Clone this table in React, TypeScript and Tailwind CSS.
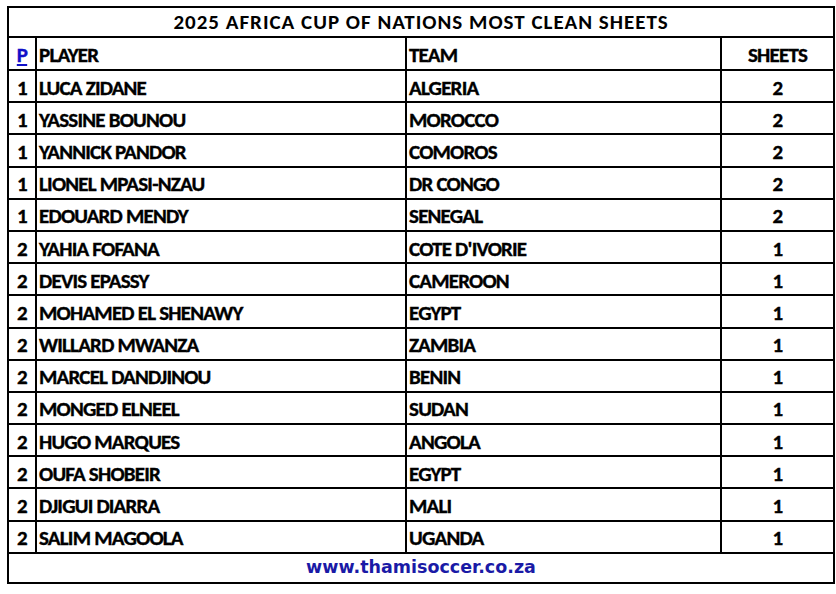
import React from "react";

const rows: [number, string, string, number][] = [
  [1, "LUCA ZIDANE", "ALGERIA", 2],
  [1, "YASSINE BOUNOU", "MOROCCO", 2],
  [1, "YANNICK PANDOR", "COMOROS", 2],
  [1, "LIONEL MPASI-NZAU", "DR CONGO", 2],
  [1, "EDOUARD MENDY", "SENEGAL", 2],
  [2, "YAHIA FOFANA", "COTE D'IVORIE", 1],
  [2, "DEVIS EPASSY", "CAMEROON", 1],
  [2, "MOHAMED EL SHENAWY", "EGYPT", 1],
  [2, "WILLARD MWANZA", "ZAMBIA", 1],
  [2, "MARCEL DANDJINOU", "BENIN", 1],
  [2, "MONGED ELNEEL", "SUDAN", 1],
  [2, "HUGO MARQUES", "ANGOLA", 1],
  [2, "OUFA SHOBEIR", "EGYPT", 1],
  [2, "DJIGUI DIARRA", "MALI", 1],
  [2, "SALIM MAGOOLA", "UGANDA", 1],
];

const font = { fontFamily: "Carlito, Lato, 'Open Sans', sans-serif" };
const cell = "border-2 border-black px-[2px] leading-none";
const data = `${cell} pt-[4px]`;
const body = "text-[21px] font-bold tracking-[-0.8px] [-webkit-text-stroke:0.35px_black]";

export default function App() {
  return (
    <div className="w-[836px] h-[594px] bg-white pl-[7px] pt-[6px]" style={font}>
      <table className="w-[826px] table-fixed border-collapse border-2 border-black text-black">
        <colgroup>
          <col className="w-[28px]" />
          <col className="w-[370px]" />
          <col className="w-[315px]" />
          <col className="w-[113px]" />
        </colgroup>
        <tbody>
          <tr className="h-[30px]">
            <td colSpan={4} className={`${cell} text-center text-[21px] font-semibold tracking-[1px]`}>
              2025 AFRICA CUP OF NATIONS MOST CLEAN SHEETS
            </td>
          </tr>
          <tr className={`h-[33px] ${body}`}>
            <td
              className={`${data} text-center text-[#1010c8] underline underline-offset-2 [-webkit-text-stroke:0.35px_#1010c8]`}
            >
              P
            </td>
            <td className={data}>PLAYER</td>
            <td className={data}>TEAM</td>
            <td className={`${data} text-center`}>SHEETS</td>
          </tr>
          {rows.map(([p, player, team, sheets], i) => (
            <tr key={i} className={`h-[32.2px] ${body}`}>
              <td className={`${data} text-center`}>{p}</td>
              <td className={data}>{player}</td>
              <td className={data}>{team}</td>
              <td className={`${data} text-center`}>{sheets}</td>
            </tr>
          ))}
          <tr className="h-[30px]">
            <td
              colSpan={4}
              className={`${cell} text-center text-[17.5px] font-bold text-[#1a1aa6]`}
              style={{ fontFamily: "'DejaVu Sans', Verdana, sans-serif" }}
            >
              www.thamisoccer.co.za
            </td>
          </tr>
        </tbody>
      </table>
    </div>
  );
}
